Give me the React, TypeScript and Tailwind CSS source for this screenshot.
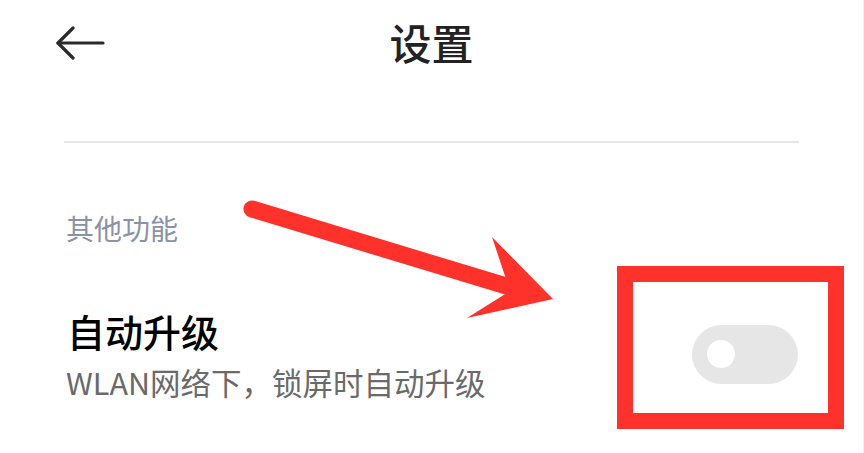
import React from 'react'

const cjk = { fontFamily: '"Noto Sans CJK SC", "Noto Sans", sans-serif' }

function BackArrow() {
  return (
    <svg width="50" height="34" viewBox="0 0 50 34" fill="none" stroke="#2b2b2b" strokeWidth="3.2" strokeLinecap="round" strokeLinejoin="round">
      <path d="M2 17 H47" />
      <path d="M17 2 L2 17 L17 32" />
    </svg>
  )
}

function Toggle() {
  return (
    <div className="w-[106px] h-[59px] rounded-full bg-[#e6e6e6] flex items-center pl-[15px]">
      <div className="w-[28px] h-[28px] rounded-full bg-white" />
    </div>
  )
}

export default function App() {
  return (
    <div className="relative w-[864px] h-[453px] overflow-hidden bg-white border-r border-[#efefef]" style={cjk}>
      <header className="h-[84px] grid grid-cols-[1fr_auto_1fr] items-center">
        <div className="pl-[56px] pt-[1px]">
          <BackArrow />
        </div>
        <h1 className="text-[42px] leading-none font-medium text-[#222222]">设置</h1>
        <div />
      </header>

      <div className="mt-[57px] mx-16 h-[1.5px] bg-[#e6e6e6]" />

      <p className="mt-[71px] px-[66px] text-[28px] leading-none text-[#8a92a6]">其他功能</p>

      <div className="mt-[70px] pl-[67px] pr-[65px] flex items-center justify-between">
        <div className="flex flex-col gap-[17px]">
          <p className="text-[38px] leading-none font-medium text-black">自动升级</p>
          <p className="text-[30.5px] leading-none text-[#6a6a6a] -ml-[1px]">WLAN网络下，锁屏时自动升级</p>
        </div>
        <Toggle />
      </div>

      {/* annotation overlay */}
      <svg className="absolute inset-0 pointer-events-none" width="864" height="453" viewBox="0 0 864 453">
        <line x1="252" y1="209" x2="516" y2="289" stroke="#ff312b" strokeWidth="17" strokeLinecap="round" />
        <polygon points="492,237 553,299 467,318 510,291" fill="#ff312b" />
      </svg>
      <div className="absolute left-[617px] top-[266px] w-[227px] h-[163px] border-[16px] border-[#ff312b]" />
    </div>
  )
}
